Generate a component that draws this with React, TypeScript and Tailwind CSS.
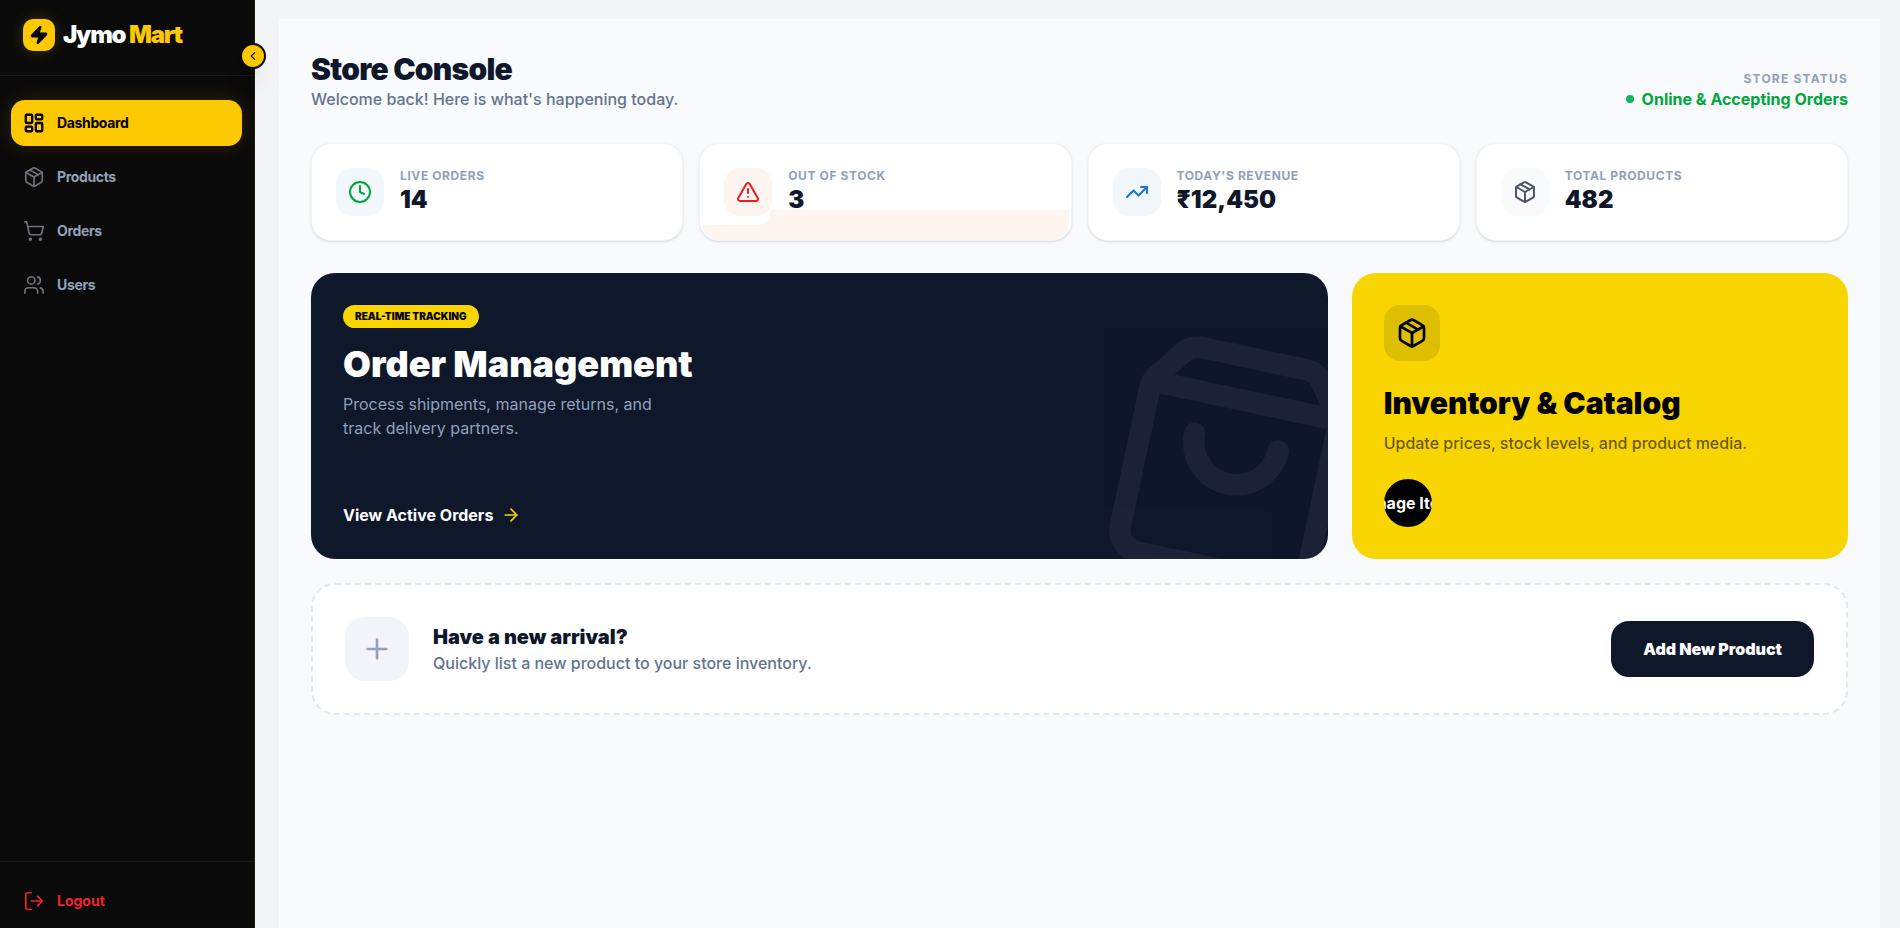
import type { ReactNode } from "react";
import {
  ArrowRight,
  ChevronLeft,
  Clock,
  LayoutDashboard,
  LogOut,
  Package,
  Plus,
  ShoppingBag,
  ShoppingCart,
  TrendingUp,
  TriangleAlert,
  Users,
  Zap,
} from "lucide-react";

const navItems = [
  { label: "Dashboard", icon: LayoutDashboard, active: true },
  { label: "Products", icon: Package, active: false },
  { label: "Orders", icon: ShoppingCart, active: false },
  { label: "Users", icon: Users, active: false },
];

function Sidebar() {
  return (
    <aside className="relative flex w-[255px] shrink-0 flex-col border-r border-[#1f1c09] bg-[#0a0a0a]">
      <div className="flex h-19 items-start gap-2 border-b border-[#1a180a] px-[23px] pt-[19px]">
        <span className="flex size-8 items-center justify-center rounded-[10px] bg-[#fcc800] shadow-[0_0_15px_rgba(252,200,0,0.2)]">
          <Zap className="size-5 fill-black text-black" />
        </span>
        <span className="text-2xl font-black tracking-tighter text-white">
          Jymo <span className="text-[#fcc800]">Mart</span>
        </span>
      </div>

      <button
        type="button"
        aria-label="Collapse sidebar"
        className="absolute top-[43px] -right-3 z-10 flex size-[26px] items-center justify-center rounded-full border-2 border-[#0a0a0a] bg-[#fcc800] text-black shadow-xl"
      >
        <ChevronLeft size={14} />
      </button>

      <nav className="flex flex-1 flex-col gap-2 py-6 pr-3 pl-[11px]">
        {navItems.map(({ label, icon: Icon, active }) => (
          <a
            key={label}
            href="#"
            className={
              active
                ? "flex h-[46px] items-center gap-3 rounded-[14px] bg-[#fcc800] px-3 text-sm font-bold tracking-tight text-black shadow-[0_0_20px_rgba(252,200,0,0.15)]"
                : "flex h-[46px] items-center gap-3 rounded-[14px] px-3 text-sm font-bold tracking-tight text-[#90a1b9]"
            }
          >
            <Icon
              size={22}
              strokeWidth={active ? 2.5 : 1.8}
              className={active ? "text-black" : "text-[#71717b]"}
            />
            {label}
          </a>
        ))}
      </nav>

      <div className="border-t border-[#1a180a] pt-4 pr-3 pb-1 pl-[11px]">
        <button
          type="button"
          className="flex h-[46px] w-full items-center gap-3 px-3 text-sm font-bold text-[#f5222d]"
        >
          <LogOut size={22} strokeWidth={1.8} />
          Logout
        </button>
      </div>
    </aside>
  );
}

interface StatCardProps {
  label: string;
  value: string;
  tint: string;
  icon: ReactNode;
  alert?: boolean;
}

function StatCard({ label, value, tint, icon, alert }: StatCardProps) {
  return (
    <div className="relative flex items-center gap-4 overflow-hidden rounded-[20px] border border-slate-100 bg-white p-6 shadow-sm">
      {alert && (
        <span className="absolute inset-x-0.5 bottom-0 h-[30px] overflow-hidden rounded-b-[18px] bg-[#fff5f0]">
          <span className="block h-[15px] w-[68px] rounded-br-xl bg-white" />
        </span>
      )}
      <div className={`relative flex size-12 shrink-0 items-center justify-center rounded-2xl ${tint}`}>
        {icon}
      </div>
      <div className="relative">
        <p className="text-xs leading-4 font-bold tracking-wider text-slate-400 uppercase">{label}</p>
        <p className="text-2xl leading-8 font-black text-slate-900">{value}</p>
      </div>
    </div>
  );
}

export default function App() {
  return (
    <div className="flex min-h-screen bg-[#f3f4f6] font-['Inter',sans-serif] antialiased">
      <Sidebar />

      <main className="flex min-w-0 flex-1 pt-[19px] pr-5 pl-6">
        <div className="flex-1 bg-slate-50 p-8">
          <header className="mb-8 flex items-end justify-between">
            <div>
              <h1 className="text-3xl leading-9 font-black tracking-tight text-slate-900">Store Console</h1>
              <p className="text-base leading-6 font-medium text-slate-500">
                Welcome back! Here is what's happening today.
              </p>
            </div>
            <div className="text-right">
              <p className="text-xs leading-4 font-bold tracking-widest text-slate-400 uppercase">Store Status</p>
              <p className="flex items-center gap-2 text-base leading-6 font-bold text-[#00a63e]">
                <span className="size-2 rounded-full bg-[#17b26a]" />
                Online &amp; Accepting Orders
              </p>
            </div>
          </header>

          <section className="mb-8 grid grid-cols-4 gap-4">
            <StatCard
              label="Live Orders"
              value="14"
              tint="bg-[#f1f7fb]"
              icon={<Clock className="text-[#00a63e]" />}
            />
            <StatCard
              label="Out of Stock"
              value="3"
              tint="bg-[#fff5f0]"
              icon={<TriangleAlert className="text-[#ec1c1c]" />}
              alert
            />
            <StatCard
              label="Today's Revenue"
              value="₹12,450"
              tint="bg-[#f1f7fb]"
              icon={<TrendingUp className="text-[#1976d2]" />}
            />
            <StatCard
              label="Total Products"
              value="482"
              tint="bg-slate-50"
              icon={<Package className="text-[#4a5565]" />}
            />
          </section>

          <section className="grid grid-cols-12 gap-6">
            <div className="relative col-span-8 flex flex-col items-start overflow-hidden rounded-3xl bg-slate-900 p-8">
              <ShoppingBag
                size={256}
                className="absolute -right-8 -bottom-8 rotate-12 text-white opacity-5"
              />
              <span className="rounded-full bg-[#f8d400] px-3 text-[10px] leading-[23px] font-black text-black uppercase">
                Real-time Tracking
              </span>
              <h2 className="mt-4 text-4xl leading-10 font-black text-white">Order Management</h2>
              <p className="mt-2 max-w-80 text-base leading-6 text-slate-400">
                Process shipments, manage returns, and track delivery partners.
              </p>
              <a href="#" className="mt-auto flex items-center gap-2 text-base leading-6 font-bold text-white">
                View Active Orders
                <ArrowRight size={20} className="text-[#f8d400]" />
              </a>
            </div>

            <div className="col-span-4 flex flex-col items-start rounded-3xl bg-[#f8d400] p-8">
              <div className="flex size-14 items-center justify-center rounded-2xl bg-black/10">
                <Package size={32} className="text-black" />
              </div>
              <h2 className="mt-6 text-3xl leading-9 font-black text-black">Inventory &amp; Catalog</h2>
              <p className="mt-2.5 text-base leading-6 font-medium text-black/60">
                Update prices, stock levels, and product media.
              </p>
              <button
                type="button"
                className="mt-6 flex size-12 items-center justify-center overflow-hidden rounded-full bg-black text-base font-bold whitespace-nowrap text-white"
              >
                Manage Items
              </button>
            </div>

            <div className="col-span-12 flex items-center gap-6 rounded-3xl border-2 border-dashed border-slate-200 bg-white p-8">
              <div className="flex size-16 items-center justify-center rounded-[20px] bg-[#f1f5f9]">
                <Plus size={32} className="text-slate-400" />
              </div>
              <div className="flex-1">
                <h3 className="text-xl leading-7 font-black text-slate-900">Have a new arrival?</h3>
                <p className="text-base leading-6 font-medium text-slate-500">
                  Quickly list a new product to your store inventory.
                </p>
              </div>
              <button
                type="button"
                className="rounded-[18px] bg-slate-900 px-8 py-4 text-base leading-6 font-black text-white"
              >
                Add New Product
              </button>
            </div>
          </section>
        </div>
      </main>
    </div>
  );
}
